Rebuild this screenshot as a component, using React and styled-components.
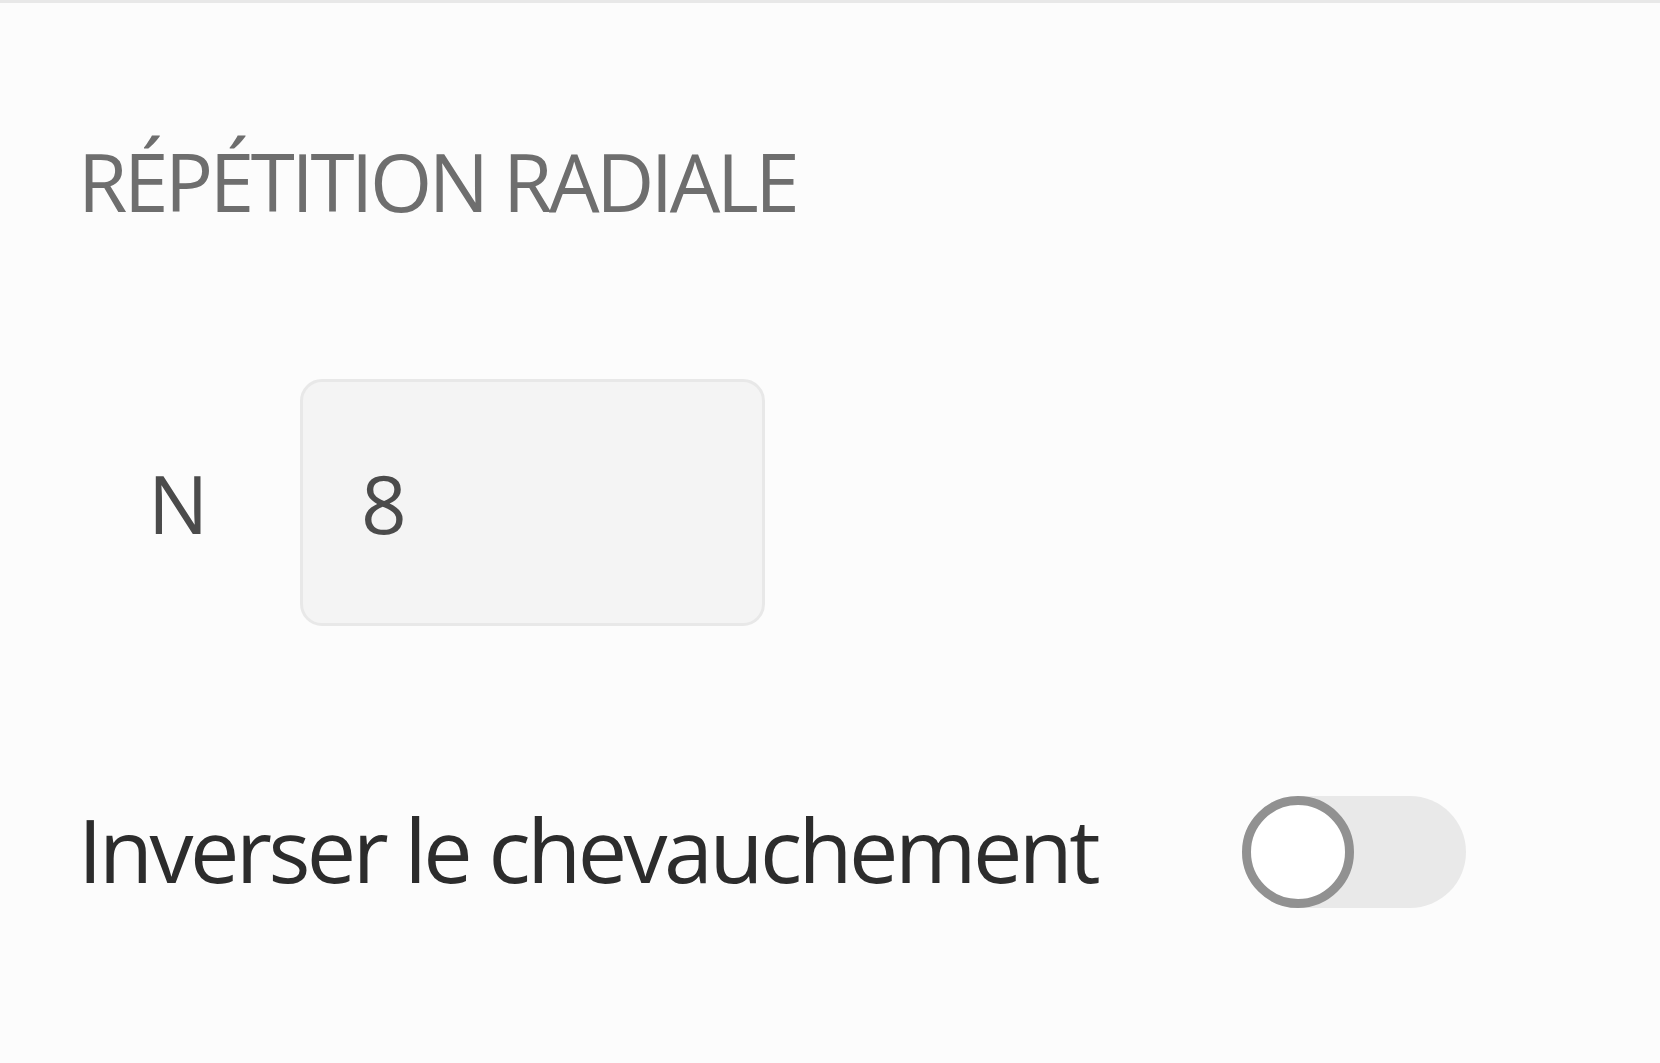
import React from 'react';
import styled, { createGlobalStyle } from 'styled-components';

const GlobalStyle = createGlobalStyle`
  html, body {
    margin: 0;
    padding: 0;
    background: #fcfcfc;
  }
  body {
    font-family: 'Open Sans', 'Noto Sans', sans-serif;
  }
`;

const Panel = styled.div`
  min-height: 100vh;
  box-sizing: border-box;
  border-top: 3px solid #e8e8e8;
  background: #fcfcfc;
  padding: 0 0 0 78px;
`;

const Heading = styled.h2`
  margin: 138px 0 0;
  font-size: 80px;
  line-height: 1;
  font-weight: 400;
  color: #6e6e6e;
  text-transform: uppercase;
  letter-spacing: -3.4px;
`;

const FieldRow = styled.div`
  display: flex;
  align-items: center;
  margin-top: 158px;
  padding-left: 70px;
`;

const FieldLabel = styled.label`
  flex: 0 0 152px;
  font-size: 80px;
  line-height: 1;
  color: #4b4b4b;
`;

const NumberInput = styled.input`
  box-sizing: border-box;
  width: 465px;
  height: 247px;
  padding: 0 0 0 58px;
  border: 3px solid #e8e8e8;
  border-radius: 22px;
  background: #f4f4f4;
  font-family: inherit;
  font-size: 80px;
  color: #4b4b4b;
  outline: none;
`;

const SwitchRow = styled.div`
  display: flex;
  align-items: center;
  margin-top: 170px;
`;

const SwitchLabel = styled.span`
  flex: 0 0 1164px;
  font-size: 88px;
  line-height: 1;
  color: #2c2c2c;
  letter-spacing: -3.5px;
  position: relative;
  top: -3px;
`;

const Track = styled.span`
  position: relative;
  display: inline-block;
  width: 224px;
  height: 112px;
  border-radius: 56px;
  background: #e9e9e9;
`;

const Knob = styled.span`
  position: absolute;
  left: 0;
  top: 0;
  box-sizing: border-box;
  width: 112px;
  height: 112px;
  border-radius: 50%;
  border: 9px solid #919191;
  background: #fff;
`;

export default function App() {
  return (
    <>
      <GlobalStyle />
      <Panel>
        <Heading>Répétition radiale</Heading>
        <FieldRow>
          <FieldLabel htmlFor="n-count">N</FieldLabel>
          <NumberInput id="n-count" defaultValue="8" />
        </FieldRow>
        <SwitchRow>
          <SwitchLabel>Inverser le chevauchement</SwitchLabel>
          <Track role="switch" aria-checked="false">
            <Knob />
          </Track>
        </SwitchRow>
      </Panel>
    </>
  );
}
